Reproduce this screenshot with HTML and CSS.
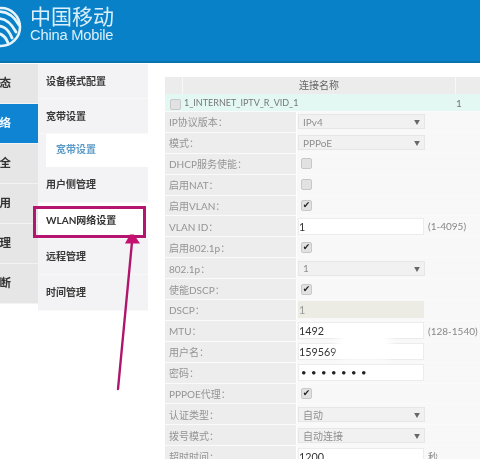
FILE: index.html
```html
<!DOCTYPE html>
<html lang="zh">
<head>
<meta charset="utf-8">
<title>China Mobile</title>
<link rel="stylesheet" href="styles.css">
</head>
<body>
<div class="page">
  <header class="header">
    <svg class="logo" width="24" height="50" viewBox="0 0 24 50" fill="none" stroke="#e6f4fc" stroke-linecap="round">
      <circle cx="1" cy="23" r="19" stroke-width="2.6"/>
      <path d="M-6 8C6 6 14 12 19 21" stroke-width="2.6"/>
      <path d="M-8 16C2 12 10 17 16 28" stroke-width="2.8"/>
      <path d="M-8 24C1 19 8 24 12 34" stroke-width="2.8"/>
      <path d="M-8 32C-1 27 5 31 8 39" stroke-width="2.8"/>
    </svg>
    <div class="brand">
      <div class="brand-cn">中国移动</div>
      <div class="brand-en">China Mobile</div>
    </div>
  </header>
  <div class="content">
    <nav class="side">
      <div class="side-item">状态</div>
      <div class="side-item active">网络</div>
      <div class="side-item">安全</div>
      <div class="side-item">应用</div>
      <div class="side-item">管理</div>
      <div class="side-item">诊断</div>
    </nav>
    <nav class="sub">
      <div class="sub-item short">设备模式配置</div>
      <div class="sub-item short">宽带设置</div>
      <div class="sub-child">宽带设置</div>
      <div class="sub-item">用户侧管理</div>
      <div class="sub-item wlan">WLAN网络设置</div>
      <div class="sub-item">远程管理</div>
      <div class="sub-item">时间管理</div>
    </nav>
    <main class="main">
      <div class="thead">
        <div class="th-a"></div>
        <div class="th-b">连接名称</div>
        <div class="th-c"></div>
      </div>
      <div class="tconn">
        <div class="conn-a"><span class="check"></span></div>
        <div class="conn-b">1_INTERNET_IPTV_R_VID_1</div>
        <div class="conn-c">1</div>
      </div>
      <div class="row"><div class="lab">IP协议版本：</div><div class="val"><div class="sel">IPv4<span class="caret">▼</span></div></div></div>
      <div class="row"><div class="lab">模式：</div><div class="val"><div class="sel">PPPoE<span class="caret">▼</span></div></div></div>
      <div class="row"><div class="lab">DHCP服务使能：</div><div class="val"><span class="check"></span></div></div>
      <div class="row"><div class="lab">启用NAT：</div><div class="val"><span class="check"></span></div></div>
      <div class="row"><div class="lab">启用VLAN：</div><div class="val"><span class="check on">✔</span></div></div>
      <div class="row"><div class="lab">VLAN ID：</div><div class="val"><div class="inp">1</div><span class="unit">(1-4095)</span></div></div>
      <div class="row"><div class="lab">启用802.1p：</div><div class="val"><span class="check on">✔</span></div></div>
      <div class="row"><div class="lab">802.1p：</div><div class="val"><div class="sel">1<span class="caret">▼</span></div></div></div>
      <div class="row"><div class="lab">使能DSCP：</div><div class="val"><span class="check on">✔</span></div></div>
      <div class="row"><div class="lab">DSCP：</div><div class="val"><div class="inp off">1</div></div></div>
      <div class="row"><div class="lab">MTU：</div><div class="val"><div class="inp">1492</div><span class="unit">(128-1540)</span></div></div>
      <div class="row"><div class="lab">用户名：</div><div class="val"><div class="inp">159569</div></div></div>
      <div class="row"><div class="lab">密码：</div><div class="val"><div class="inp dots">•••••••</div></div></div>
      <div class="row"><div class="lab">PPPOE代理：</div><div class="val"><span class="check on">✔</span></div></div>
      <div class="row"><div class="lab">认证类型：</div><div class="val"><div class="sel">自动<span class="caret">▼</span></div></div></div>
      <div class="row"><div class="lab">拨号模式：</div><div class="val"><div class="sel">自动连接<span class="caret">▼</span></div></div></div>
      <div class="row"><div class="lab">超时时间：</div><div class="val"><div class="inp">1200</div><span class="unit">秒</span></div></div>
    </main>
  </div>
  <div class="smudge"></div>
  <div class="mark"></div>
  <svg class="arrow" width="40" height="170" viewBox="0 0 40 170" fill="none">
    <path d="M7 157L21 10" stroke="#b0156c" stroke-width="2.4" stroke-linecap="round"/>
    <path d="M19 2.500L23 2.500L29 11.500L14 11.500Z" fill="#c4106f"/>
  </svg>
</div>
</body>
</html>
```
FILE: styles.css
```css
* { box-sizing: border-box; }
html, body { margin: 0; padding: 0; background: #fff; }
.page {
  position: relative;
  width: 480px;
  height: 459px;
  overflow: hidden;
  font-family: Lato, "Noto Sans CJK SC", sans-serif;
  filter: blur(0.35px);
}
.header {
  height: 63px;
  background: #0981c8;
  border-bottom: 2px solid #0872ae;
  display: flex;
  align-items: flex-start;
  padding-top: 4px;
}
.logo { flex: none; width: 24px; height: 50px; }
.brand { margin-left: 6px; color: #dcf0fb; }
.brand-cn { font-size: 21px; line-height: 24px; height: 24px; white-space: nowrap; }
.brand-en { font-size: 14.700px; line-height: 17px; margin-top: -1px; letter-spacing: -0.2px; font-family: "Liberation Sans", sans-serif; white-space: nowrap; }
.content { display: flex; align-items: flex-start; padding-top: 1px; }
.side { flex: none; width: 38px; background: #e6e6e6; }
.side-item {
  height: 40px;
  display: flex;
  justify-content: flex-end;
  align-items: center;
  padding-right: 27px;
  padding-bottom: 3px;
  overflow: hidden;
  font-size: 11.500px;
  font-weight: 700;
  color: #333;
  border-bottom: 1px solid #f3f3f3;
  white-space: nowrap;
}
.side-item.active { background: #0f84d2; color: #f2f8fc; }
.sub { flex: none; width: 110px; height: 247px; background: #f3f3f5; }
.sub-item {
  height: 36px;
  display: flex;
  align-items: center;
  padding-left: 8px;
  padding-bottom: 2px;
  font-size: 10px;
  font-weight: 700;
  color: #3a3a3a;
  border-bottom: 1px solid #f8f8f8;
  white-space: nowrap;
}
.sub-item.short { height: 35px; }
.sub-item.wlan { background: #fff; color: #333; }
.sub-child {
  height: 33px;
  margin-left: 8px;
  padding-left: 10px;
  padding-bottom: 4px;
  display: flex;
  align-items: center;
  background: #fff;
  font-size: 10px;
  font-weight: 700;
  color: #5c9cc8;
}
.main { flex: none; width: 320px; margin: 13px 0 0 17px; font-size: 10px; color: #8d8d8d; }
.thead, .tconn { display: flex; height: 17px; align-items: center; }
.thead { background: #ececec; color: #666; }
.th-a { width: 18px; height: 100%; border-right: 1px solid #f8f8f8; }
.th-b { width: 273px; text-align: center; height: 100%; line-height: 16px; border-right: 1px solid #f8f8f8; }
.th-c { flex: 1; }
.tconn { background: #e4f8f3; color: #777; }
.conn-a { width: 18px; height: 100%; display: flex; align-items: flex-end; padding-left: 2px; padding-bottom: 1px; }
.conn-b { width: 273px; white-space: nowrap; font-size: 9px; padding-left: 1px; }
.conn-c { flex: 1; }
.row { display: flex; height: 20.900px; border-top: 1px solid #fafafa; }
.lab {
  flex: none;
  width: 131px;
  padding-left: 4px;
  background: #ededed;
  display: flex;
  align-items: center;
  white-space: nowrap;
  color: #949494;
}
.val {
  flex: 1;
  margin-left: 1px;
  padding-left: 1px;
  background: #f8f8f8;
  display: flex;
  align-items: center;
}
.sel {
  width: 127px;
  height: 15px;
  background: #f1f1f1;
  border: 1px solid #e6e6e6;
  padding-left: 4px;
  display: flex;
  align-items: center;
  justify-content: space-between;
  color: #8f8f8f;
  font-size: 10px;
}
.caret { font-size: 6px; color: #666; padding-right: 4px; }
.inp {
  width: 126px;
  height: 17px;
  background: #fff;
  border: 1px solid #ececec;
  padding-left: 0;
  display: flex;
  align-items: center;
  font-size: 10.800px;
  color: #333;
}
.inp.off { background: #ecece4; border-color: #ecece4; color: #999; }
.inp.dots { letter-spacing: 4.500px; padding-left: 2px; font-size: 9.500px; color: #222; }
.unit { margin-left: 4px; font-size: 10px; color: #888; }
.check {
  width: 11px;
  height: 11px;
  margin-left: 3px;
  background: #e2e2e2;
  border: 1px solid #c8c8c8;
  border-radius: 2px;
  display: block;
  flex: none;
}
.check.on {
  font-size: 9px;
  line-height: 9px;
  text-align: center;
  color: #222;
  font-family: "DejaVu Sans", sans-serif;
}
.smudge {
  position: absolute;
  left: 336px;
  top: 331px;
  width: 56px;
  height: 29px;
  border-radius: 14px;
  background: #fff;
  filter: blur(4px);
}
.mark {
  position: absolute;
  left: 33px;
  top: 206px;
  width: 113px;
  height: 32px;
  border: 3px solid #b5156e;
}
.arrow { position: absolute; left: 111px; top: 232px; }
```
